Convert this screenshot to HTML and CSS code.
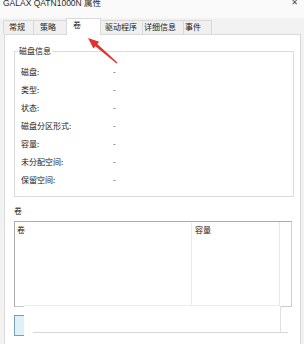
FILE: index.html
```html
<!DOCTYPE html>
<html lang="zh">
<head>
<meta charset="utf-8">
<link rel="stylesheet" href="styles.css">
</head>
<body>
<div class="window">
  <div class="titlebar">
    <span class="title">GALAX QATN1000N 属性</span>
    <span class="close">✕</span>
  </div>
  <div class="tabs">
    <div class="tab t1">常规</div>
    <div class="tab t2">策略</div>
    <div class="tab active">卷</div>
    <div class="tab t4">驱动程序</div>
    <div class="tab t5">详细信息</div>
    <div class="tab t6">事件</div>
  </div>
  <div class="panel">
    <fieldset class="group">
      <legend>磁盘信息</legend>
      <div class="row"><span class="label">磁盘:</span><span class="value">-</span></div>
      <div class="row"><span class="label">类型:</span><span class="value">-</span></div>
      <div class="row"><span class="label">状态:</span><span class="value">-</span></div>
      <div class="row"><span class="label">磁盘分区形式:</span><span class="value">-</span></div>
      <div class="row"><span class="label">容量:</span><span class="value">-</span></div>
      <div class="row"><span class="label">未分配空间:</span><span class="value">-</span></div>
      <div class="row"><span class="label">保留空间:</span><span class="value">-</span></div>
    </fieldset>
    <div class="section-label">卷</div>
    <div class="list">
      <div class="col c1"><div class="head">卷</div></div>
      <div class="col c2"><div class="head">容量</div></div>
      <div class="col c3"></div>
    </div>
    <div class="buttons"><div class="btn"></div></div>
  </div>
  <div class="overlay"></div>
  <svg class="arrow" width="36" height="32" viewBox="0 0 36 32">
    <polygon points="4,4 9.4,14.6 11.3,12.3 32.6,29.5 33.4,28.5 13.3,10.1 15.2,7.8" fill="#e2322d"/>
  </svg>
</div>
</body>
</html>
```

FILE: styles.css
```css
* { box-sizing: border-box; }
html, body { margin: 0; padding: 0; }
body {
  background: #f2f2f2;
  font-family: "Noto Sans CJK SC", "Noto Sans", sans-serif;
  font-size: 8px;
  color: #222;
}
.window {
  position: relative;
  width: 304px;
  height: 344px;
  overflow: hidden;
  background: #f2f2f2;
}
.titlebar {
  height: 18px;
  display: flex;
  justify-content: space-between;
  align-items: flex-start;
  background: #fafafa;
  overflow: hidden;
}
.title {
  font-family: "Liberation Sans", "Noto Sans CJK SC", sans-serif;
  font-size: 8.5px;
  line-height: 10px;
  margin-top: -2px;
  padding-left: 3px;
  color: #2a2a2a;
}
.close {
  font-family: "DejaVu Sans", sans-serif;
  font-size: 8px;
  line-height: 10px;
  margin-top: -2px;
  padding-right: 6px;
  color: #444;
}
.tabs {
  display: flex;
  align-items: flex-end;
  height: 16px;
  padding-left: 3px;
}
.tab {
  height: 14px;
  border: 1px solid #d9d9d9;
  border-bottom: 0;
  background: #f0f0f0;
  margin-right: -1px;
  line-height: 12px;
  white-space: nowrap;
  color: #222;
}
.t1 { width: 31px; padding-left: 5px; }
.t2 { width: 34px; padding-left: 6px; }
.active {
  width: 35px;
  height: 17px;
  padding-left: 6px;
  background: #fff;
  margin-bottom: -1px;
  position: relative;
  z-index: 1;
}
.t4 { width: 43px; padding-left: 4px; }
.t5 { width: 42px; padding-left: 1px; }
.t6 { width: 29px; padding-left: 1px; }
.panel {
  margin: 0 3px 0 4px;
  height: 310px;
  border: 1px solid #dadada;
  border-bottom: 0;
  background: #fff;
  padding: 0 6px 0 9px;
}
.group {
  margin: 12px 0 0;
  border: 1px solid #dcdcdc;
  padding: 8px 0 7px 6px;
  min-width: 0;
}
.group legend {
  font-size: 8px;
  line-height: 8px;
  padding: 0 1px;
  margin-left: -3px;
  color: #222;
}
.row {
  display: flex;
  height: 18px;
  line-height: 18px;
}
.label { width: 92px; }
.value { color: #444; }
.section-label {
  margin-top: 9px;
  line-height: 10px;
  height: 10px;
}
.list {
  margin: 5px 2px 0 0;
  height: 86px;
  display: flex;
  border-top: 1px solid #acacac;
  border-left: 1px solid #acacac;
  border-right: 1px solid #cfcfcf;
  border-bottom: 1px solid #c8c8c8;
}
.col { height: 100%; }
.c1 { width: 176px; }
.c2 { width: 88px; border-left: 1px solid #ececec; }
.c3 { flex: 1; border-left: 1px solid #e6e6e6; }
.head {
  line-height: 16px;
  padding-left: 2px;
}
.c2 .head { padding-left: 3px; }
.buttons {
  margin-top: 8px;
  display: flex;
}
.btn {
  width: 60px;
  height: 21px;
  border: 1px solid #7a9cb5;
  background: #dff1f8;
}
.overlay {
  position: absolute;
  left: 24px;
  top: 305px;
  width: 256px;
  height: 39px;
  background: #fff;
  border-top: 1px solid #ececec;
}
.overlay::after {
  content: "";
  position: absolute;
  left: 9px;
  right: -8px;
  top: 26px;
  border-top: 1px solid #d6d6d6;
}
.overlay::before {
  content: "";
  position: absolute;
  right: -1px;
  top: 0;
  height: 27px;
  border-right: 1px solid #e0e0e0;
}
.arrow {
  position: absolute;
  left: 84px;
  top: 34px;
}
```
